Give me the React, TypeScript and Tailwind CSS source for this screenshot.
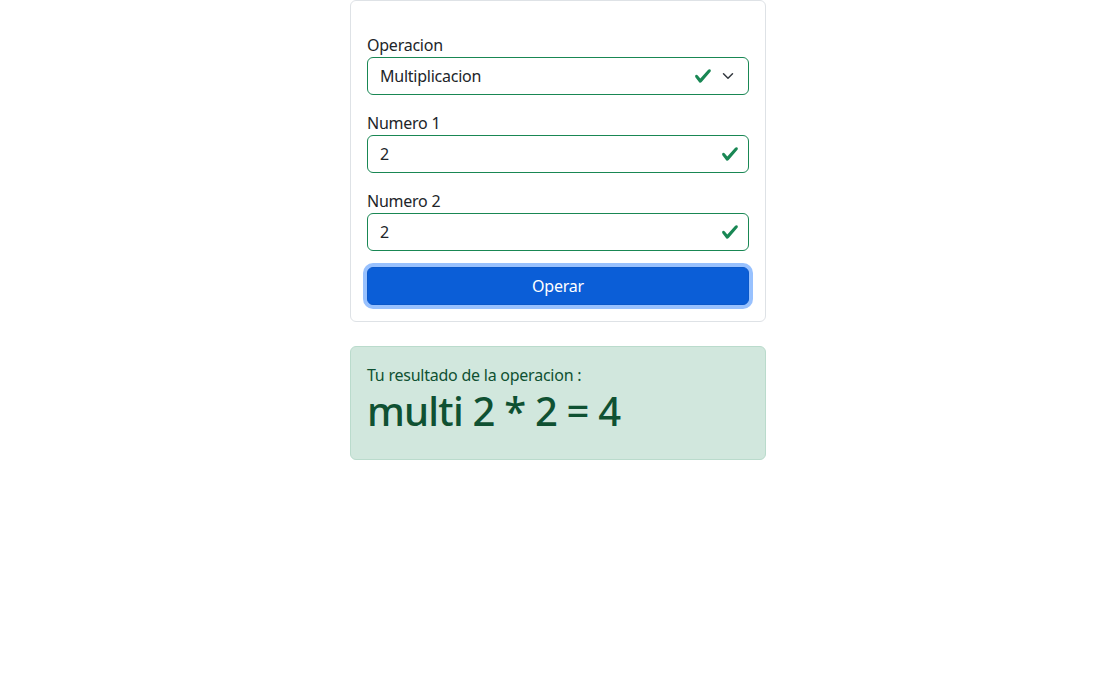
import { useState } from 'react'

const font = { fontFamily: '"Noto Sans", "Open Sans", sans-serif' }

// icono de validacion (mismo trazo que el de bootstrap)
const ValidCheck = ({ className }: { className: string }) => (
  <svg viewBox="0 0 8 8" className={className} aria-hidden>
    <path
      fill="#198754"
      d="M2.3 6.73.6 4.53c-.4-1.04.46-1.4 1.1-.8l1.1 1.4 3.4-3.8c.6-.63 1.6-.27 1.2.7l-4 4.6c-.43.5-.8.4-1.1.1z"
    />
  </svg>
)

const Chevron = () => (
  <svg viewBox="0 0 16 16" className="absolute right-[13px] top-1/2 -translate-y-1/2 w-4 h-3 pointer-events-none" aria-hidden>
    <path fill="none" stroke="#343a40" strokeLinecap="round" strokeLinejoin="round" strokeWidth="2" d="m2 5 6 6 6-6" />
  </svg>
)

export default function App() {
  const [op, setOp] = useState('multi')
  const [n1, setN1] = useState('2')
  const [n2, setN2] = useState('2')

  return (
    <div className="min-h-screen bg-white text-[#212529] text-base leading-6 tracking-[-0.015em]" style={font}>
      <div className="ml-[350px] w-[416px]">
        {/* formulario */}
        <div className="border border-[#dee2e6] rounded-md bg-white p-4">
          <div className="pt-4 flex flex-col gap-4">
            <div>
              <label className="block">Operacion</label>
              <div className="relative">
                <select
                  value={op}
                  onChange={(e) => setOp(e.target.value)}
                  className="appearance-none w-full h-[38px] border border-[#198754] rounded-md pl-3 pr-[72px] bg-white outline-none tracking-[-0.015em]"
                  style={font}
                >
                  <option value="suma">Suma</option>
                  <option value="resta">Resta</option>
                  <option value="multi">Multiplicacion</option>
                  <option value="div">Division</option>
                </select>
                <ValidCheck className="absolute right-[37px] top-1/2 -translate-y-1/2 w-[18px] h-[18px] pointer-events-none" />
                <Chevron />
              </div>
            </div>

            <div>
              <label className="block">Numero 1</label>
              <div className="relative">
                <input
                  value={n1}
                  onChange={(e) => setN1(e.target.value)}
                  className="w-full h-[38px] border border-[#198754] rounded-md pl-3 pr-9 bg-white outline-none"
                  style={font}
                />
                <ValidCheck className="absolute right-[10px] top-1/2 -translate-y-1/2 w-[18px] h-[18px] pointer-events-none" />
              </div>
            </div>

            <div>
              <label className="block">Numero 2</label>
              <div className="relative">
                <input
                  value={n2}
                  onChange={(e) => setN2(e.target.value)}
                  className="w-full h-[38px] border border-[#198754] rounded-md pl-3 pr-9 bg-white outline-none"
                  style={font}
                />
                <ValidCheck className="absolute right-[10px] top-1/2 -translate-y-1/2 w-[18px] h-[18px] pointer-events-none" />
              </div>
            </div>

            <button
              type="button"
              className="w-full h-[38px] rounded-md bg-[#0b5ed7] border border-[#0a58ca] text-white shadow-[0_0_0_4px_rgba(49,132,253,0.5)]"
              style={font}
            >
              Operar
            </button>
          </div>
        </div>

        {/* resultado */}
        <div className="mt-6 border border-[#badbcc] bg-[#d1e7dd] text-[#0f5132] rounded-md p-4">
          <p>Tu resultado de la operacion :</p>
          <h1 className="text-[40px] leading-[48px] font-medium mb-2 tracking-[-0.02em]">
            multi {n1} * {n2} = {Number(n1) * Number(n2)}
          </h1>
        </div>
      </div>
    </div>
  )
}
